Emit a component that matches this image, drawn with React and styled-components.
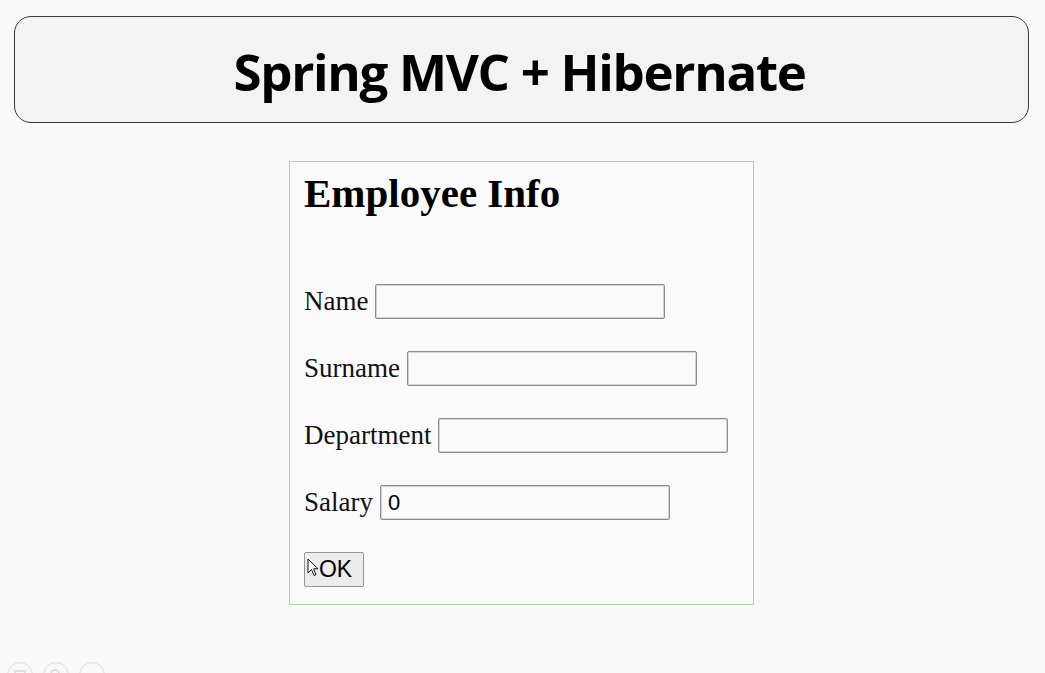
import React from 'react';
import styled, { createGlobalStyle } from 'styled-components';

const GlobalStyle = createGlobalStyle`
  html, body {
    margin: 0;
    padding: 0;
    background: #f9f9f9;
    overflow: hidden;
  }
  body {
    width: 1045px;
    height: 673px;
  }
`;

const fields = [
  { label: 'Name', value: '' },
  { label: 'Surname', value: '' },
  { label: 'Department', value: '' },
  { label: 'Salary', value: '0' },
];

const App = () => {
  return (
    <Page>
      <GlobalStyle />
      <Banner>
        <h1>Spring MVC + Hibernate</h1>
      </Banner>
      <Panel>
        <Heading>Employee Info</Heading>
        <Fields>
          {fields.map((f) => (
            <Row key={f.label}>
              <Label>{f.label}</Label>
              <Input type='text' defaultValue={f.value} readOnly />
            </Row>
          ))}
          <SubmitWrap>
            <Submit type='button'>OK</Submit>
            <Pointer width='12' height='19' viewBox='0 0 12 19'>
              <path
                d='M1 1 L1 15 L4.5 11.5 L7 17.5 L9 16.6 L6.6 10.8 L11 10.8 Z'
                fill='#fff'
                stroke='#111'
                strokeWidth='1'
                strokeLinejoin='round'
              />
            </Pointer>
          </SubmitWrap>
        </Fields>
      </Panel>
      <Controls>
        <Round>
          <svg width='14' height='14' viewBox='0 0 14 14'>
            <rect x='2' y='3' width='10' height='8' fill='none' stroke='#d6d6d6' strokeWidth='1.5' />
          </svg>
        </Round>
        <Round>
          <svg width='14' height='14' viewBox='0 0 14 14'>
            <circle cx='6' cy='6' r='4' fill='none' stroke='#d6d6d6' strokeWidth='1.5' />
          </svg>
        </Round>
        <Round />
      </Controls>
    </Page>
  );
};

const Page = styled.div`
  display: flex;
  flex-direction: column;
  padding: 16px 0 0 14px;
  height: 673px;
  box-sizing: border-box;
  overflow: hidden;
  & > * {
    flex-shrink: 0;
  }
`;

const Banner = styled.header`
  width: 1015px;
  height: 107px;
  box-sizing: border-box;
  border: 1px solid #3a3a3a;
  border-radius: 17px;
  background: #f3f3f3;
  display: flex;
  align-items: center;
  justify-content: center;
  h1 {
    margin: 0;
    font-family: 'Open Sans', 'Noto Sans', sans-serif;
    font-weight: 700;
    font-size: 51px;
    letter-spacing: -1.3px;
    color: #000;
    transform: translate(-2px, 1px);
  }
`;

const Panel = styled.section`
  margin: 38px 0 0 275px;
  width: 465px;
  height: 444px;
  box-sizing: border-box;
  border: 1px solid #b7cfa6;
  background: #fafafa;
  padding: 8px 14px;
  display: flex;
  flex-direction: column;
`;

const Heading = styled.h2`
  margin: 0;
  font-family: 'Liberation Serif', 'Times New Roman', serif;
  font-weight: 700;
  font-size: 41px;
  line-height: 46px;
  color: #000;
`;

const Fields = styled.div`
  margin-top: 68px;
  display: flex;
  flex-direction: column;
  gap: 32px;
`;

const Row = styled.div`
  display: flex;
  align-items: center;
  gap: 7px;
  height: 35px;
`;

const Label = styled.label`
  font-family: 'Liberation Serif', 'Times New Roman', serif;
  font-size: 27px;
  color: #111;
  line-height: 35px;
`;

const Input = styled.input`
  width: 290px;
  height: 35px;
  box-sizing: border-box;
  border: 1px solid #8c8c8c;
  border-radius: 2px;
  box-shadow: inset 0 0 0 1px #d4d4d4;
  background: #fafafa;
  padding: 0 7px;
  font-family: 'Liberation Sans', Arial, sans-serif;
  font-size: 22px;
  color: #000;
  outline: none;
`;

const SubmitWrap = styled.div`
  position: relative;
  width: 60px;
  height: 35px;
`;

const Submit = styled.button`
  width: 60px;
  height: 35px;
  box-sizing: border-box;
  border: 1px solid #959595;
  border-radius: 2px;
  background: #ececec;
  font-family: 'Liberation Sans', Arial, sans-serif;
  font-size: 23px;
  color: #000;
  padding: 0 0 0 3px;
`;

const Pointer = styled.svg`
  position: absolute;
  left: 3px;
  top: 6px;
`;

const Controls = styled.div`
  margin-top: 57px;
  margin-left: -7px;
  display: flex;
  gap: 10px;
`;

const Round = styled.div`
  width: 26px;
  height: 26px;
  box-sizing: border-box;
  border: 1.5px solid #dedede;
  border-radius: 50%;
  display: flex;
  align-items: center;
  justify-content: center;
`;

export default App;
